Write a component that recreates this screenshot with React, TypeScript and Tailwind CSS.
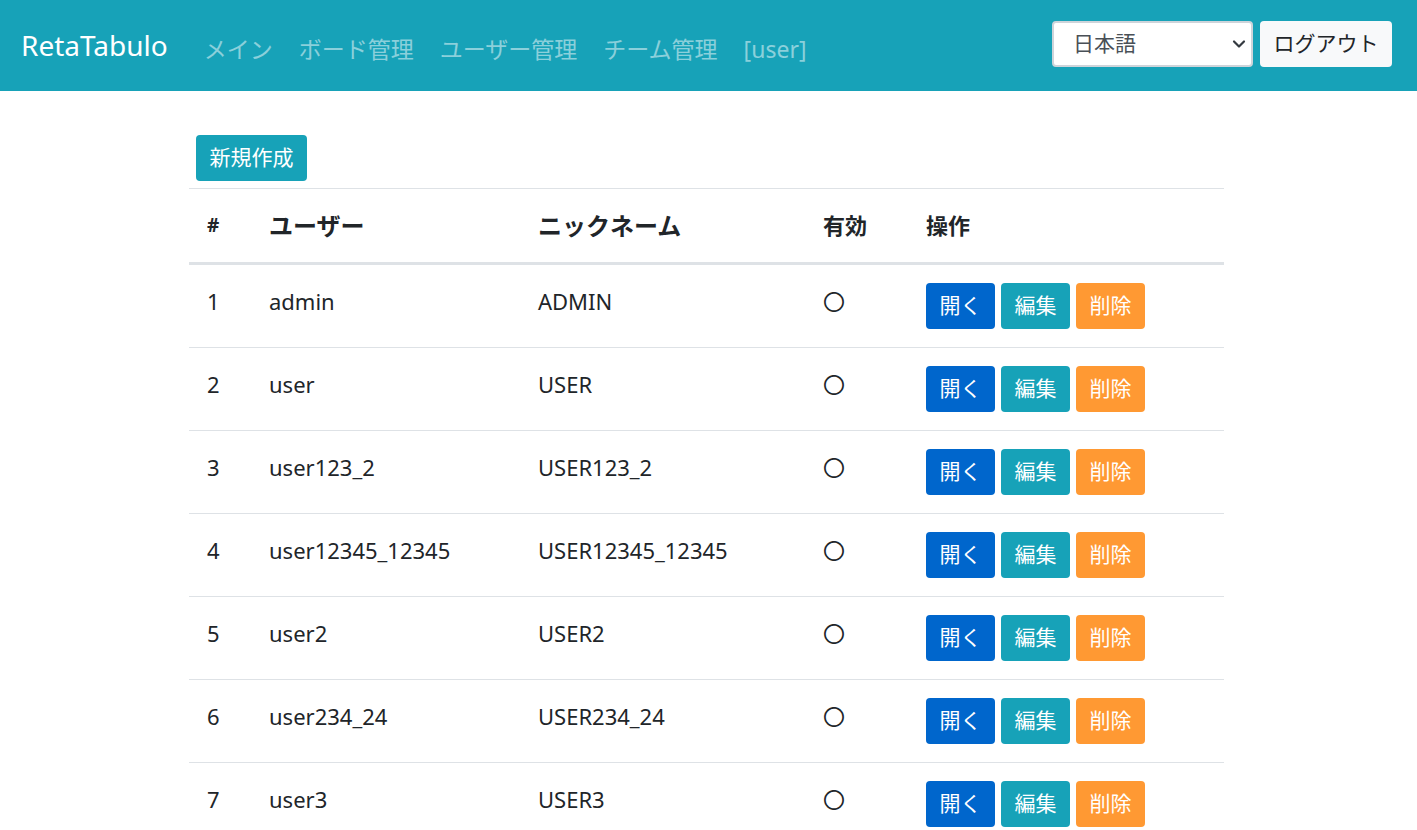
import React from "react";

const users = [
  { id: 1, name: "admin", nick: "ADMIN" },
  { id: 2, name: "user", nick: "USER" },
  { id: 3, name: "user123_2", nick: "USER123_2" },
  { id: 4, name: "user12345_12345", nick: "USER12345_12345" },
  { id: 5, name: "user2", nick: "USER2" },
  { id: 6, name: "user234_24", nick: "USER234_24" },
  { id: 7, name: "user3", nick: "USER3" },
];

const font = {
  fontFamily: '"Noto Sans", "Noto Sans CJK JP", sans-serif',
};

const App = () => {
  return (
    <div className="min-h-screen w-full bg-white text-[#212529]" style={font}>
      <header className="flex h-[91px] w-full items-center justify-between bg-[#17a2b8] pl-[21px] pr-[25px]">
        <div className="flex items-center">
          <div className="mb-[2px] text-[28px] text-white">RetaTabulo</div>
          <nav className="ml-[36px] mt-[8px] flex items-center space-x-[26px] text-[23px] text-white/50">
            <a>メイン</a>
            <a>ボード管理</a>
            <a>ユーザー管理</a>
            <a>チーム管理</a>
            <a>[user]</a>
          </nav>
        </div>
        <div className="mb-[4px] flex items-center space-x-[7px]">
          <div className="relative flex h-[46px] w-[201px] items-center rounded border-2 border-[#ced4da] bg-white pl-[19px] text-[21px] text-[#495057]">
            日本語
            <svg
              className="absolute right-[5px] top-[16px]"
              width="14"
              height="10"
              viewBox="0 0 14 10"
            >
              <path
                d="M2 2.5l5 5 5-5"
                stroke="#343a40"
                strokeWidth="2.2"
                fill="none"
                strokeLinecap="round"
                strokeLinejoin="round"
              />
            </svg>
          </div>
          <button className="flex h-[46px] w-[132px] items-center justify-center rounded bg-[#f8f9fa] text-[21px] text-[#212529]">
            ログアウト
          </button>
        </div>
      </header>

      <main className="ml-[189px] w-[1035px] pt-[44px]">
        <button className="ml-[7px] flex h-[46px] w-[111px] items-center justify-center rounded bg-[#17a2b8] text-[21px] text-white">
          新規作成
        </button>
        <table className="mt-[7px] w-full border-collapse text-left text-[22px]">
          <thead>
            <tr className="border-t border-b-[3px] border-t-[#dee2e6] border-b-[#dee2e6] font-bold">
              <th className="w-[62px] py-[18px] pl-[18px] text-[19px] leading-[37px]">#</th>
              <th className="w-[269px] py-[18px] pl-[18px] text-[24px] leading-[37px]">ユーザー</th>
              <th className="w-[285px] py-[18px] pl-[18px] text-[24px] leading-[37px]">ニックネーム</th>
              <th className="w-[103px] py-[18px] pl-[18px] text-[22px] leading-[37px]">有効</th>
              <th className="py-[18px] pl-[18px] text-[22px] leading-[37px]">操作</th>
            </tr>
          </thead>
          <tbody>
            {users.map((u) => (
              <tr key={u.id} className="border-b border-[#dee2e6]">
                <td className="pb-[18px] pl-[18px] pt-[16px] align-top leading-[40px]">{u.id}</td>
                <td className="pb-[18px] pl-[18px] pt-[16px] align-top leading-[40px]">{u.name}</td>
                <td className="pb-[18px] pl-[18px] pt-[16px] align-top leading-[40px]">{u.nick}</td>
                <td className="pb-[18px] pl-[18px] pt-[16px] align-top leading-[40px]">〇</td>
                <td className="py-[18px] pl-[18px] align-top">
                  <div className="flex space-x-[6px]">
                    <button className="flex h-[46px] w-[69px] items-center justify-center rounded bg-[#0066cc] text-[21px] text-white">
                      開く
                    </button>
                    <button className="flex h-[46px] w-[69px] items-center justify-center rounded bg-[#17a2b8] text-[21px] text-white">
                      編集
                    </button>
                    <button className="flex h-[46px] w-[69px] items-center justify-center rounded bg-[#ff9933] text-[21px] text-white">
                      削除
                    </button>
                  </div>
                </td>
              </tr>
            ))}
          </tbody>
        </table>
      </main>
    </div>
  );
};

export default App;
